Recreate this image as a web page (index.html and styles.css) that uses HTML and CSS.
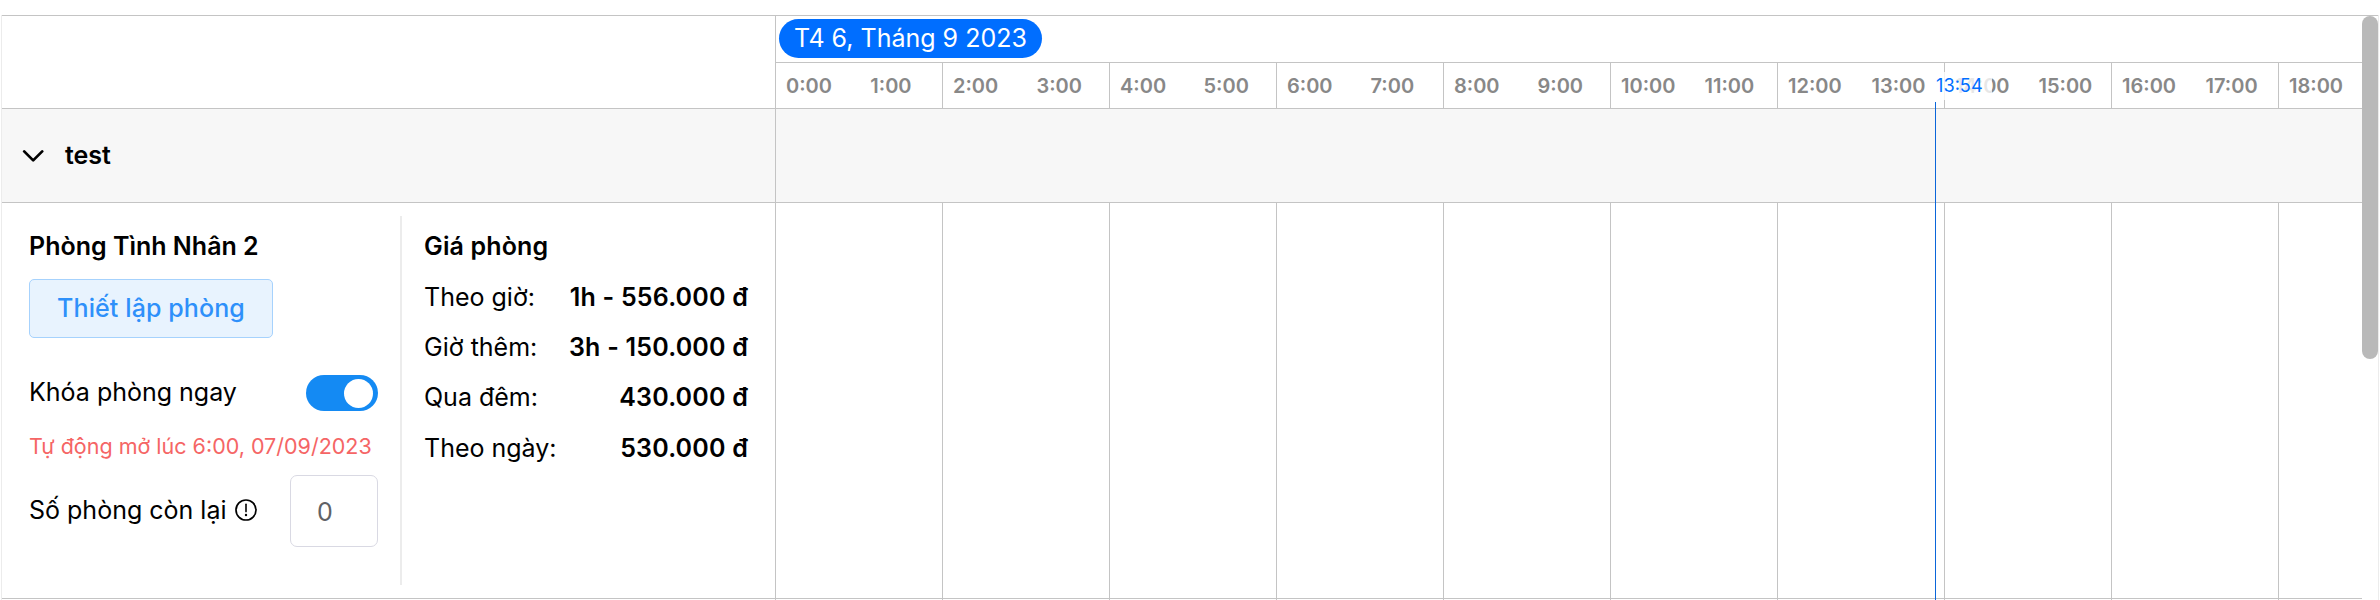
FILE: index.html
```html
<!DOCTYPE html>
<html lang="vi">
<head>
<meta charset="utf-8">
<title>Lịch phòng</title>
<link rel="stylesheet" href="styles.css">
</head>
<body>
<main class="board">
  <div class="scheduler">
    <header class="head">
      <div class="head-side"></div>
      <div class="head-time">
        <div class="date-row"><span class="date-badge">T4 6, Tháng 9 2023</span></div>
        <div class="hours">
          <div class="slot"><span>0:00</span><span>1:00</span></div>
          <div class="slot"><span>2:00</span><span>3:00</span></div>
          <div class="slot"><span>4:00</span><span>5:00</span></div>
          <div class="slot"><span>6:00</span><span>7:00</span></div>
          <div class="slot"><span>8:00</span><span>9:00</span></div>
          <div class="slot"><span>10:00</span><span>11:00</span></div>
          <div class="slot"><span>12:00</span><span>13:00</span></div>
          <div class="slot"><span>14:00</span><span>15:00</span></div>
          <div class="slot"><span>16:00</span><span>17:00</span></div>
          <div class="slot"><span>18:00</span></div>
        </div>
      </div>
    </header>
    <section class="group">
      <div class="group-side">
        <svg class="chevron" width="22" height="14" viewBox="0 0 22 14"><path d="M2.2 2.4l9 9 9-9" fill="none" stroke="#000" stroke-width="2.7" stroke-linecap="round" stroke-linejoin="round"/></svg>
        <span class="group-name">test</span>
      </div>
      <div class="group-time"></div>
    </section>
    <section class="room">
      <div class="room-side">
        <div class="room-info">
          <h2 class="title">Phòng Tình Nhân 2</h2>
          <button class="setup">Thiết lập phòng</button>
          <div class="lock"><span class="label">Khóa phòng ngay</span><span class="switch"><span class="knob"></span></span></div>
          <p class="note">Tự động mở lúc 6:00, 07/09/2023</p>
          <div class="remain">
            <span class="label">Số phòng còn lại</span>
            <svg class="info" width="22" height="22" viewBox="0 0 22 22"><circle cx="11" cy="11" r="10" fill="none" stroke="#000" stroke-width="1.7"/><path d="M11 5.2v7.4" stroke="#000" stroke-width="1.6" stroke-linecap="round"/><circle cx="11" cy="16" r="1.2"/></svg>
            <div class="count">0</div>
          </div>
        </div>
        <div class="prices">
          <h2 class="title">Giá phòng</h2>
          <div class="price"><span>Theo giờ:</span><b>1h - 556.000 đ</b></div>
          <div class="price"><span>Giờ thêm:</span><b>3h - 150.000 đ</b></div>
          <div class="price"><span>Qua đêm:</span><b>430.000 đ</b></div>
          <div class="price"><span>Theo ngày:</span><b>530.000 đ</b></div>
        </div>
      </div>
      <div class="room-time"></div>
    </section>
    <div class="tail"><div class="tail-side"></div><div class="tail-time"></div></div>
    <div class="now-line"></div>
    <div class="now-label">13:54</div>
  </div>
  <div class="gutter"><div class="thumb"></div></div>
</main>
</body>
</html>
```
FILE: styles.css
```css
* { box-sizing: border-box; }
body { margin: 0; background: #fff; color: #000; font: 25px/30px Inter, "Noto Sans", sans-serif; height: 600px; overflow: hidden; }
h2, p { margin: 0; }
.board { display: flex; margin: 15px 1px 0; height: 585px; border: solid #ececec; border-width: 0 1px; }
.scheduler { position: relative; width: 2360px; display: flex; flex-direction: column; }
.head { display: flex; height: 94px; border-top: 1px solid #c4c4c4; border-bottom: 1px solid #c4c4c4; }
.head-side, .group-side, .room-side, .tail-side { flex: none; width: 773px; }
.head-time { flex: 1; border-left: 1px solid #c4c4c4; }
.date-row { height: 47px; padding: 3px; border-bottom: 1px solid #c4c4c4; }
.date-badge { display: flex; align-items: center; width: 263px; height: 39px; padding: 0 0 2px 15px; border-radius: 20px; background: #006eff; color: #fff; white-space: nowrap; }
.hours { display: flex; height: 45px; }
.slot { flex: none; display: grid; grid-template-columns: 83.5px 72px; width: 167px; align-items: center; padding-left: 10px; border-right: 1px solid #c4c4c4; color: #888; font-size: 20px; font-weight: 600; }
.slot:first-child { grid-template-columns: 84.3px 71px; }
.slot:last-child { width: 83px; border: 0; }
.group { display: flex; height: 94px; background: #f7f7f7; border-bottom: 1px solid #c4c4c4; }
.group-side { display: flex; align-items: center; gap: 21px; padding-left: 20px; font-weight: 600; }
.group-name, .label { padding-bottom: 2px; }
.group-time { flex: 1; border-left: 1px solid #c4c4c4; }
.room { display: flex; height: 396px; border-bottom: 1px solid #c4c4c4; }
.room-side { display: flex; padding: 13px 27px 13px 27px; }
.room-time, .tail-time { flex: 1; border-left: 1px solid #c4c4c4; background: repeating-linear-gradient(90deg, transparent 0 166px, #c4c4c4 166px 167px); }
.tail { display: flex; height: 1px; }
.room-info { width: 373px; padding: 15px 22px 0 0; border-right: 2px solid #ececec; }
.title { height: 30px; font: inherit; font-weight: 600; }
.setup { display: block; width: 244px; height: 59px; margin: 18px 0 37px; padding: 0 0 2px; border: 1px solid #a6d2fd; border-radius: 5px; background: #e8f3fe; color: #2e90fa; font: inherit; font-weight: 500; letter-spacing: .1px; }
.lock { display: flex; align-items: center; justify-content: space-between; height: 36px; }
.switch { display: flex; justify-content: flex-end; align-items: center; width: 72px; height: 36px; padding-right: 5px; border-radius: 18px; background: #148af3; }
.knob { width: 29px; height: 29px; border-radius: 50%; background: #fff; }
.note { height: 28px; margin: 21px 0 15px; line-height: 28px; font-size: 21.5px; color: #f56565; white-space: nowrap; }
.remain { display: flex; align-items: center; height: 72px; }
.info { margin: 0 0 3px 8px; }
.count { display: flex; align-items: center; width: 88px; height: 72px; margin-left: auto; padding: 2px 0 0 26px; border: 1px solid #d9d9e3; border-radius: 7px; color: #606266; }
.prices { flex: 1; padding: 15px 0 0 22px; }
.prices .title { margin-bottom: 10.6px; letter-spacing: .15px; }
.price { display: flex; justify-content: space-between; align-items: center; height: 50.3px; }
.price b { font-weight: 600; letter-spacing: .2px; }
.now-line { position: absolute; left: 1933px; top: 87px; bottom: 0; width: 1px; background: #0b66da; }
.now-label { position: absolute; left: 1934px; top: 57px; width: 56px; height: 28px; background: rgba(255,255,255,.8); color: #006eff; font-size: 18.2px; line-height: 27px; }
.gutter { width: 16px; border-top: 1px solid #c4c4c4; }
.thumb { height: 343px; border-radius: 8px; background: #b9b9b9; }
```
